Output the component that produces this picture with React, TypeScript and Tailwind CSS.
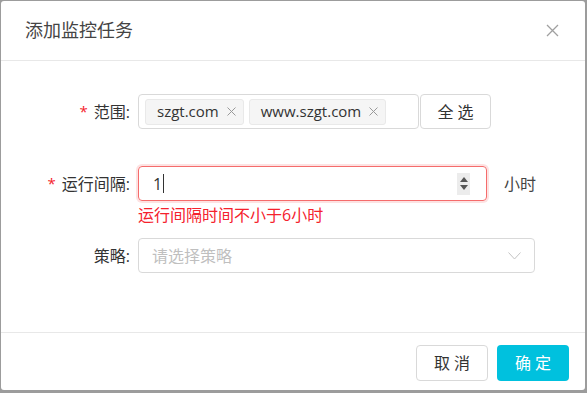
import React from "react";

const font = {
  fontFamily: '"Open Sans", "Noto Sans CJK SC", sans-serif',
};

function Tag({ label }: { label: string }) {
  return (
    <span className="flex h-[26px] items-center rounded-[3px] border border-[#e9e9e9] bg-[#f5f5f5] pl-[11px] pr-[7px] text-[15px] text-[#333]">
      {label}
      <svg className="ml-[8px]" width="9" height="9" viewBox="0 0 9 9" stroke="#999" strokeWidth="1">
        <path d="M0.5 0.5L8.5 8.5M8.5 0.5L0.5 8.5" />
      </svg>
    </span>
  );
}

function Label({ text, required }: { text: string; required?: boolean }) {
  return (
    <div className="flex h-[35px] w-[137px] shrink-0 items-center justify-end pr-[8px] text-[16px] text-[#333]">
      {required && <span className="mr-[6px] text-[15px] text-[#f5222d]">*</span>}
      {text}:
    </div>
  );
}

export default function App() {
  return (
    <div className="h-[393px] w-[587px] bg-[#9c9c9c] pl-px pt-px" style={font}>
      <div className="flex h-[389px] w-[584px] flex-col rounded-[3px] bg-white">
        <div className="flex h-[60px] shrink-0 items-center justify-between border-b border-[#e8e8e8] pl-[24px] pr-[26px]">
          <span className="text-[18px] text-[#444]">添加监控任务</span>
          <svg width="13" height="13" viewBox="0 0 13 13" stroke="#a0a0a0" strokeWidth="1.3">
            <path d="M1 1L12 12M12 1L1 12" />
          </svg>
        </div>

        <div className="flex-1 pt-[33px]">
          <div className="flex items-start">
            <Label text="范围" required />
            <div className="flex h-[35px] w-[281px] items-center gap-[5px] rounded-[4px] border border-[#d9d9d9] px-[6px]">
              <Tag label="szgt.com" />
              <Tag label="www.szgt.com" />
            </div>
            <button className="ml-px h-[35px] w-[71px] rounded-[4px] border border-[#d9d9d9] text-[16px] text-[#333]">
              全 选
            </button>
          </div>

          <div className="mt-[37px] flex items-start">
            <Label text="运行间隔" required />
            <div>
              <div className="flex h-[35px] w-[349px] items-center rounded-[4px] border border-[#f56c6c] pl-[14px] pr-[16px] shadow-[0_0_0_2px_rgba(245,108,108,0.2)]">
                <span className="text-[16px] text-[#333]">1</span>
                <span className="ml-[1px] h-[19px] w-px bg-[#333]" />
                <div className="ml-auto flex h-[22px] w-[13px] flex-col items-center justify-center gap-[3px] bg-[#ececec]">
                  <svg width="8" height="5" viewBox="0 0 8 5">
                    <path d="M4 0L8 5H0Z" fill="#555" />
                  </svg>
                  <svg width="8" height="5" viewBox="0 0 8 5">
                    <path d="M0 0H8L4 5Z" fill="#555" />
                  </svg>
                </div>
              </div>
              <div className="mt-[5px] text-[16px] leading-[19px] text-[#f5222d]">
                运行间隔时间不小于6小时
              </div>
            </div>
            <div className="ml-[17px] flex h-[35px] items-center text-[16px] text-[#444]">小时</div>
          </div>

          <div className="mt-[13px] flex items-start">
            <Label text="策略" />
            <div className="flex h-[35px] w-[397px] items-center justify-between rounded-[4px] border border-[#d9d9d9] pl-[13px] pr-[13px]">
              <span className="text-[16px] text-[#bfbfbf]">请选择策略</span>
              <svg width="13" height="8" viewBox="0 0 13 8" fill="none" stroke="#c4c4c4" strokeWidth="1">
                <path d="M0.5 0.5L6.5 7L12.5 0.5" />
              </svg>
            </div>
          </div>
        </div>

        <div className="flex h-[58px] shrink-0 items-start justify-end gap-[9px] border-t border-[#e8e8e8] pr-[16px] pt-[12px]">
          <button className="h-[36px] w-[72px] rounded-[4px] border border-[#d9d9d9] bg-white text-[16px] text-[#333]">
            取 消
          </button>
          <button className="h-[36px] w-[72px] rounded-[4px] bg-[#00c1de] text-[16px] text-white">
            确 定
          </button>
        </div>
      </div>
    </div>
  );
}
